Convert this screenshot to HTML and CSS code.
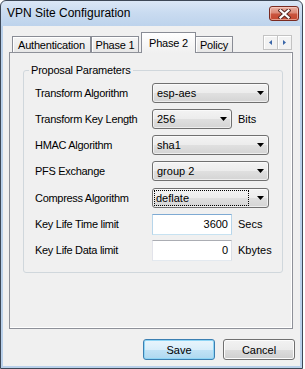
FILE: index.html
```html
<!DOCTYPE html>
<html>
<head>
<meta charset="utf-8">
<link rel="stylesheet" href="styles.css">
</head>
<body>
<div class="window">
  <div class="titlebar">
    <span class="title">VPN Site Configuration</span>
    <div class="close">
      <svg width="13" height="10" viewBox="0 0 13 10">
        <path d="M2.5 1.5 L10.5 8.5 M10.5 1.5 L2.5 8.5" stroke="#5b2a24" stroke-width="4.2" stroke-linecap="square" fill="none"/>
        <path d="M2.5 1.5 L10.5 8.5 M10.5 1.5 L2.5 8.5" stroke="#ffffff" stroke-width="2.2" stroke-linecap="square" fill="none"/>
      </svg>
    </div>
  </div>
  <div class="client">
    <div class="tabstrip">
      <div class="tab tab-auth">Authentication</div>
      <div class="tab tab-p1">Phase 1</div>
      <div class="tab tab-p2 selected">Phase 2</div>
      <div class="tab tab-policy">Policy</div>
      <div class="scrollers">
        <span class="scroll"><svg width="3" height="5" viewBox="0 0 3 5"><path d="M3 0V5L0 2.5z" fill="#3a66a8"/></svg></span>
        <span class="scroll"><svg width="3" height="5" viewBox="0 0 3 5"><path d="M0 0V5L3 2.5z" fill="#3a66a8"/></svg></span>
      </div>
    </div>
    <div class="panel">
      <fieldset class="group">
        <legend>Proposal Parameters</legend>
        <div class="rows">
          <span class="label">Transform Algorithm</span>
          <div class="ctl"><div class="combo wide"><span class="val">esp-aes</span><span class="arrow"><svg width="7" height="4" viewBox="0 0 7 4"><path d="M0 0H7L3.5 4z" fill="#000"/></svg></span></div></div>

          <span class="label">Transform Key Length</span>
          <div class="ctl"><div class="combo short"><span class="val">256</span><span class="arrow"><svg width="7" height="4" viewBox="0 0 7 4"><path d="M0 0H7L3.5 4z" fill="#000"/></svg></span></div><span class="unit">Bits</span></div>

          <span class="label">HMAC Algorithm</span>
          <div class="ctl"><div class="combo wide"><span class="val">sha1</span><span class="arrow"><svg width="7" height="4" viewBox="0 0 7 4"><path d="M0 0H7L3.5 4z" fill="#000"/></svg></span></div></div>

          <span class="label">PFS Exchange</span>
          <div class="ctl"><div class="combo wide"><span class="val">group 2</span><span class="arrow"><svg width="7" height="4" viewBox="0 0 7 4"><path d="M0 0H7L3.5 4z" fill="#000"/></svg></span></div></div>

          <span class="label">Compress Algorithm</span>
          <div class="ctl"><div class="combo wide focused"><span class="val focus">deflate</span><span class="arrow"><svg width="7" height="4" viewBox="0 0 7 4"><path d="M0 0H7L3.5 4z" fill="#000"/></svg></span></div></div>

          <span class="label">Key Life Time limit</span>
          <div class="ctl"><div class="field hover">3600</div><span class="unit">Secs</span></div>

          <span class="label">Key Life Data limit</span>
          <div class="ctl"><div class="field">0</div><span class="unit">Kbytes</span></div>
        </div>
      </fieldset>
    </div>
    <div class="actions">
      <button class="btn default">Save</button>
      <button class="btn">Cancel</button>
    </div>
  </div>
</div>
</body>
</html>
```

FILE: styles.css
```css
html, body {
  margin: 0;
  padding: 0;
  background: #ffffff;
}

body {
  font-family: "Liberation Sans", Arial, sans-serif;
  font-size: 11px;
  color: #000;
}

.window {
  width: 303px;
  height: 369px;
  box-sizing: border-box;
  border: 1px solid #3d4857;
  border-radius: 6px 6px 0 0;
  padding: 0 2px 2px;
  background: linear-gradient(#dbe7f6 0, #c9dbf0 12px, #bdd3ec 25px, #b9d0ea 25px, #b9d0ea 100%);
  display: flex;
  flex-direction: column;
}

.titlebar {
  height: 25px;
  display: flex;
  justify-content: space-between;
  align-items: flex-start;
}

.title {
  font-size: 12px;
  line-height: 25px;
  padding-left: 4px;
  color: #000;
}

.close {
  width: 30px;
  height: 15px;
  box-sizing: border-box;
  margin: 5px 1px 0 0;
  border: 1px solid #7a2a20;
  border-radius: 3px;
  background: linear-gradient(#eab1a4 0, #dc8a78 45%, #c9543e 55%, #c4472f 100%);
  box-shadow: inset 0 0 0 1px rgba(255, 220, 210, 0.55);
  display: flex;
  align-items: center;
  justify-content: center;
}

.client {
  flex: 1;
  background: #f0f0f0;
  display: flex;
  flex-direction: column;
  padding: 6px 5px 6px 6px;
}

.tabstrip {
  display: flex;
  align-items: flex-end;
  height: 20px;
  padding-left: 3px;
  margin-right: 2px;
}

.tab {
  box-sizing: border-box;
  height: 16px;
  border: 1px solid #898c95;
  border-bottom: none;
  background: linear-gradient(#f5f5f5, #e7e7e7);
  box-shadow: inset 1px 1px #ffffff;
  display: flex;
  align-items: center;
  justify-content: center;
  white-space: nowrap;
  letter-spacing: -0.2px;
}

.tab-auth { width: 79px; }
.tab-p1 { width: 48px; }
.tab-p2 { width: 55px; margin-left: 2px; }
.tab-policy { width: 38px; margin-left: -1px; }

.tab.selected {
  height: 21px;
  margin-bottom: -1px;
  padding-bottom: 1px;
  background: linear-gradient(#ffffff, #f6f6f6 60%, #f0f0f0);
  box-shadow: none;
  position: relative;
  z-index: 1;
}

.scrollers {
  margin-left: auto;
  margin-right: 1px;
  margin-bottom: 2px;
  display: flex;
}

.scroll {
  width: 15px;
  height: 15px;
  box-sizing: border-box;
  border: 1px solid #c3c3c3;
  background: #f2f2f2;
  box-shadow: inset 1px 1px #ffffff;
  display: flex;
  align-items: center;
  justify-content: center;
}

.scroll + .scroll {
  margin-left: -1px;
}

.panel {
  flex: 1;
  margin-right: 2px;
  border: 1px solid #8e9199;
  background: #f0f0f0;
  box-shadow: inset 0 -1px #ffffff, inset -1px 0 #ffffff;
}

.group {
  margin: 11px 9px 0 13px;
  padding: 0;
  border: 1px solid #d0d7dc;
  border-radius: 3px;
  min-width: 0;
}

.group legend {
  margin-left: 5px;
  padding: 0 2px;
  line-height: 13px;
  letter-spacing: -0.2px;
}

.rows {
  display: grid;
  grid-template-columns: 117px auto;
  grid-auto-rows: 21px;
  row-gap: 5.33px;
  align-items: center;
  padding: 5px 0 11px 11px;
}

.label {
  white-space: nowrap;
  letter-spacing: -0.3px;
}

.ctl {
  display: flex;
  align-items: center;
  gap: 6px;
}

.combo {
  box-sizing: border-box;
  height: 20px;
  border: 1px solid #707070;
  border-radius: 3px;
  background: linear-gradient(#f3f3f3 0, #ececec 50%, #e0e0e0 50%, #d4d4d4 100%);
  box-shadow: inset 0 0 0 1px rgba(255, 255, 255, 0.6);
  display: flex;
  align-items: center;
  padding: 0 4px 0 4px;
}

.combo.wide { width: 117px; }
.combo.short { width: 80px; }

.combo .val {
  flex: 1;
  white-space: nowrap;
}

.combo .arrow {
  display: flex;
}

.combo.focused {
  padding-left: 1px;
}

.val.focus {
  box-sizing: border-box;
  height: 16px;
  line-height: 14px;
  border: 1px dotted #000;
  padding-left: 1px;
  margin-right: 8px;
}

.field {
  box-sizing: border-box;
  width: 80px;
  height: 21px;
  background: #ffffff;
  border: 1px solid;
  border-color: #abadb3 #dbdfe6 #e3e9ef #e2e3ea;
  text-align: right;
  padding-right: 3px;
  line-height: 19px;
}

.field.hover {
  border-color: #7eaad3 #b7d5ea #c7e2f1 #b7d5ea;
}

.unit {
  white-space: nowrap;
}

.actions {
  display: flex;
  justify-content: flex-end;
  gap: 8px;
  margin-top: 10px;
}

.btn {
  width: 72px;
  height: 21px;
  box-sizing: border-box;
  margin: 0;
  padding: 0;
  font-family: "Liberation Sans", Arial, sans-serif;
  font-size: 11px;
  color: #000;
  border: 1px solid #707070;
  border-radius: 3px;
  background: linear-gradient(#f2f2f2 0, #ebebeb 50%, #dddddd 50%, #cfcfcf 100%);
  box-shadow: inset 0 0 0 1px #fcfcfc;
}

.btn.default {
  border-color: #3c7fb1;
  background: linear-gradient(#e9f5fc 0, #d9eefa 50%, #c2e3f6 50%, #aed8f0 100%);
  box-shadow: inset 0 0 0 1px #8ed5f5;
}
```
